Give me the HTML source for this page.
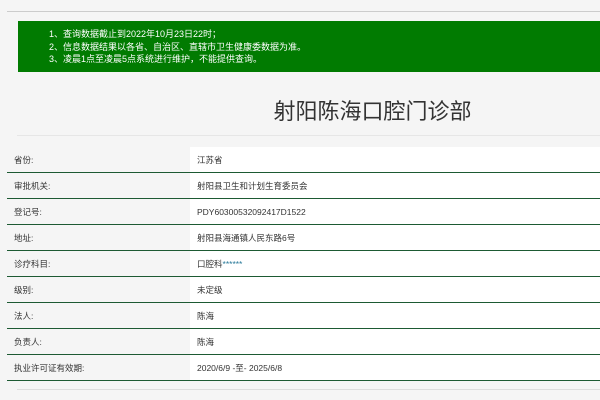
<!DOCTYPE html>
<html><head><meta charset="utf-8"><style>
body{margin:0;width:600px;height:400px;background:#f5f5f5;position:relative;overflow:hidden;font-family:"Liberation Sans","Noto Sans CJK SC",sans-serif;}
.hl{position:absolute;height:1px;background:#d8d8d8;}
.g{position:absolute;left:18px;top:21px;width:582px;height:51px;background:#017b01;color:#fff;font-size:9px;line-height:12.5px;padding-top:7px;box-sizing:border-box;}
.g div{padding-left:31px}
h1{position:absolute;left:150px;width:445px;top:94px;margin:0;text-align:center;font-weight:normal;font-size:22px;color:#333;}
table{position:absolute;left:7px;top:147px;width:593px;border-collapse:collapse;font-size:8.5px;color:#333;}
td{height:25px;border-bottom:1.5px solid #1d5a33;padding:0;}
td.l{width:183px;padding-left:7px;box-sizing:border-box;}
td.v{background:#fff;padding-left:7px;}
</style></head><body>
<div class="hl" style="left:7px;top:11px;width:593px;background:#ccc"></div>
<div class="g"><div>1、查询数据截止到2022年10月23日22时；</div><div>2、信息数据结果以各省、自治区、直辖市卫生健康委数据为准。</div><div>3、凌晨1点至凌晨5点系统进行维护，不能提供查询。</div></div>
<h1>射阳陈海口腔门诊部</h1>
<div class="hl" style="left:17px;top:135px;width:583px;background:#e6e6e6"></div>
<table>
<tr><td class="l">省份:</td><td class="v">江苏省</td></tr>
<tr><td class="l">审批机关:</td><td class="v">射阳县卫生和计划生育委员会</td></tr>
<tr><td class="l">登记号:</td><td class="v">PDY60300532092417D1522</td></tr>
<tr><td class="l">地址:</td><td class="v">射阳县海通镇人民东路6号</td></tr>
<tr><td class="l">诊疗科目:</td><td class="v">口腔科<span style="color:#2a7a9a">******</span></td></tr>
<tr><td class="l">级别:</td><td class="v">未定级</td></tr>
<tr><td class="l">法人:</td><td class="v">陈海</td></tr>
<tr><td class="l">负责人:</td><td class="v">陈海</td></tr>
<tr><td class="l">执业许可证有效期:</td><td class="v">2020/6/9 -至- 2025/6/8</td></tr>
</table>
<div class="hl" style="left:17px;top:389px;width:583px;background:#ddd"></div>
</body></html>
